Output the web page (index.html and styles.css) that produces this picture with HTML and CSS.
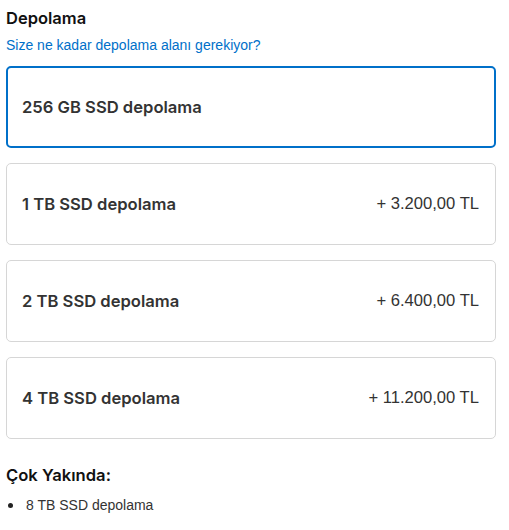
FILE: index.html
```html
<!DOCTYPE html>
<html lang="tr">
<head>
<meta charset="utf-8">
<title>Depolama</title>
<link rel="stylesheet" href="styles.css">
</head>
<body>
<section class="storage">
  <h2 class="title">Depolama</h2>
  <p class="question">Size ne kadar depolama alanı gerekiyor?</p>
  <div class="options">
    <div class="option selected"><span class="name">256 GB SSD depolama</span></div>
    <div class="option"><span class="name">1 TB SSD depolama</span><span class="price">+ 3.200,00 TL</span></div>
    <div class="option"><span class="name">2 TB SSD depolama</span><span class="price">+ 6.400,00 TL</span></div>
    <div class="option"><span class="name">4 TB SSD depolama</span><span class="price">+ 11.200,00 TL</span></div>
  </div>
  <h3 class="soon">Çok Yakında:</h3>
  <ul class="soon-list">
    <li class="soon-item"><span class="dot"></span>8 TB SSD depolama</li>
  </ul>
</section>
</body>
</html>
```
FILE: styles.css
```css
html, body {
  margin: 0;
  padding: 0;
  background: #ffffff;
}
body {
  font-family: "Liberation Sans", Arial, sans-serif;
  color: #333333;
}
.storage {
  width: 490px;
  padding: 9px 0 0 6px;
}
.title {
  margin: 0;
  font-family: Inter, "Liberation Sans", sans-serif;
  font-weight: 600;
  font-size: 16.5px;
  line-height: 18px;
  color: #111111;
}
.question {
  margin: 10px 0 0 0;
  font-size: 14px;
  line-height: 16px;
  color: #0070c9;
}
.options {
  display: flex;
  flex-direction: column;
  gap: 15px;
  margin-top: 13px;
}
.option {
  box-sizing: border-box;
  height: 82px;
  display: flex;
  align-items: center;
  justify-content: space-between;
  border: 1px solid #d6d6d6;
  border-radius: 5px;
  padding: 0 16px 0 15px;
}
.option.selected {
  border: 2px solid #0070c9;
  padding: 0 15px 0 14px;
}
.name {
  font-family: Inter, "Liberation Sans", sans-serif;
  font-weight: 600;
  font-size: 16.6px;
  line-height: 20px;
  color: #333333;
}
.price {
  font-size: 16.6px;
  line-height: 20px;
  color: #333333;
}
.soon {
  margin: 27px 0 0 0;
  font-family: Inter, "Liberation Sans", sans-serif;
  font-weight: 600;
  font-size: 16.6px;
  line-height: 19px;
  color: #111111;
}
.soon-list {
  list-style: none;
  margin: 12px 0 0 0;
  padding: 0;
}
.soon-item {
  display: flex;
  align-items: center;
  font-size: 14px;
  line-height: 16px;
  color: #333333;
}
.dot {
  width: 5px;
  height: 5px;
  border-radius: 50%;
  background: #222222;
  margin: 0 13px 0 2px;
}
```
